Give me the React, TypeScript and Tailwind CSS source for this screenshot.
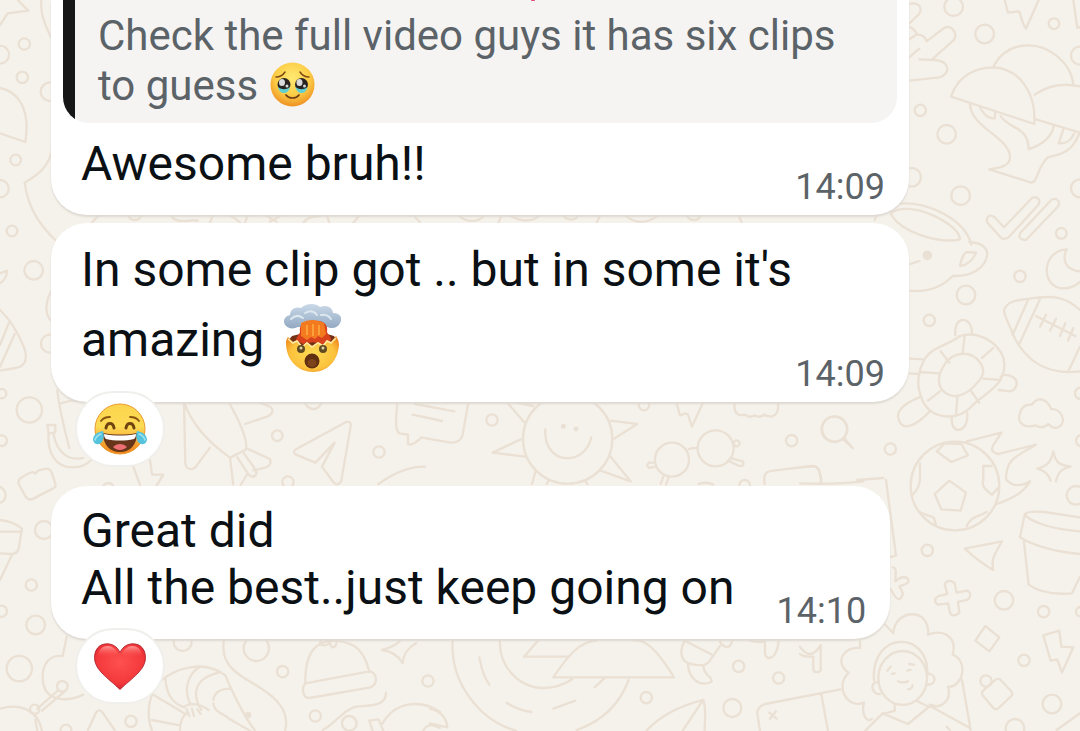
import type { ReactNode } from 'react';

type Dot = [number, number, number];

function Dots({ items }: { items: Dot[] }) {
  return (
    <>
      {items.map(([cx, cy, r]) => (
        <circle key={`${cx}-${cy}`} cx={cx} cy={cy} r={r} />
      ))}
    </>
  );
}

/* Doodle wallpaper, drawn in tiles at three times the display scale */
function Wallpaper() {
  return (
    <svg
      viewBox="0 0 1080 731"
      preserveAspectRatio="xMidYMid slice"
      fill="none"
      stroke="#eae0d4"
      strokeWidth={7}
      strokeLinecap="round"
      strokeLinejoin="round"
      className="absolute inset-0 h-full w-full"
      aria-hidden="true"
    >
      {/* top left */}
      <g transform="scale(.3333)">
        <Dots items={[[73, 132, 17], [0, 164, 27], [67, 232, 17], [150, 275, 28], [47, 480, 16], [0, 566, 26], [36, 693, 16]]} />
        <path d="M53 0l32 32-62 8-23 35M124 0c-4 45 14 80 30 114M0 264c54 10 92 62 76 162L0 400M156 450c-10 50-40 74-82 98 10 74 42 124 92 172" />
        <path d="M276 668c14-20 30-28 50-30M385 645c4 20 34 20 38 0M515 650c20 24 60 6 78 12M630 668l8-20M690 645l30 22M735 668l8-22M795 645l35 20M810 665l30-16M910 668c12-16 30-20 50-20M980 645l8 22M1060 668l20-24M1240 645l20 22M1380 650c20 16 50 18 70 0M1495 668l10-22M1530 645c30 22 70 22 90 0M1690 645c8 18 38 18 45 0M1790 668l10-20M1880 650c30 22 60 20 90 0M2060 645c8 20 36 20 44 0M2215 645l10 22" />
      </g>

      {/* left edge */}
      <g transform="translate(0 210) scale(.3333)">
        <Dots items={[[101, 181, 28], [150, 401, 27], [88, 600, 38], [5, 551, 14], [5, 692, 16], [-8, 855, 25], [132, 960, 27], [94, 1125, 17], [4, 1204, 17], [107, 1245, 28], [58, 1376, 38]]} />
        <path d="M0 190l21-8c0 14-8 30-21 38M0 300c32 30 55 70 72 112 14 40 0 58-26 62L0 482M26 340L0 405M44 372L0 470M158 235c-22 36-26 78-4 98" />
        <path d="M0 930c24 2 46 10 66 26l-10 60c-4 14-12 16-22 16L0 1030M0 965h64M36 1034L0 1110" />
        <path d="M60 806l22-14 16-6 8 5 8-9 26-6c8 0 12 4 16 14l10 32c2 8-2 12-8 14l-58 30c-8 4-16 4-22-4l-20-36c-4-8-4-14 2-20z" />
        <path d="M142 645h24v22l-20 4z" />
      </g>

      {/* between second and third bubbles, left */}
      <g transform="translate(0 380) scale(.3333)">
        <Dots items={[[832, 167, 16], [1137, 216, 17], [864, 306, 17], [940, 62, 25], [325, 326, 17]]} />
        <path d="M172 30c6 60 22 120 36 174M178 72c40-16 90-16 140 20M146 160c-6 54 20 104 74 102 24 0 42-10 54-22M160 160c12 66 50 82 90 74M400 260l22 60M450 240l6 44h34l-22 36" />
        <path d="M552 65l4 184c2 22 24 24 34 8l40-54M552 65c20 60 70 120 138 168l10 80M685 65c30 50 62 120 52 144l-46 24M735 132l66-22c22-10 20-26 4-32l-32-12M740 205l70 32c4 12 0 22-14 26l-36 8M712 232l34 52c14 14 30 0 20-16l-34-48M740 285l-18 30" />
        <path d="M888 208l150-82c12-2 16 4 14 14l-28 162c-6 14-16 14-24 4l-34-46 38-72-58 60-58-24c-8-6-8-12 0-16zM1135 312c60-42 100-52 140-52M1192 68c-4 50-8 80 6 92l26 4v28c14 8 22-8 36-14" />
      </g>

      {/* sun, glasses and magnifier */}
      <g transform="translate(400 390) scale(.3333)">
        <Dots items={[[276, 90, 17], [732, 45, 16], [1175, 152, 17], [816, 209, 51], [947, 175, 54], [1303, 118, 38], [1034, 286, 16], [1010, 160, 9], [503, 147, 134]]} />
        <circle cx={490} cy={109} r={4} fill="#eae0d4" />
        <circle cx={528} cy={117} r={4} fill="#eae0d4" />
        <path d="M62 142l90 16c18 0 32-8 36-24l18-102M45 42l118 22M38 74l88 19" />
        <path d="M436 118c-6 110 120 112 138 24M322 38l50 58M350 38l50 10M632 92l80 10-70 44M362 148l-84 40 98 12M630 198l62 76-90-32M406 246l-10 36M446 272l-6 10M556 272l6 10" />
        <path d="M866 178c8-4 16-4 26-4M764 218h-16c-8 4-8 12 0 16l18-4M790 260l-8 22M806 262l-8 22M990 204l38 10c6 10 0 16-10 14l-34-16M896 282c16-6 32-4 44 2M830 40l10 36 16-6 8 4 12 36 32-70M1004 40c-4 28 10 40 30 34 10 8 20 8 30 2 10 6 20 6 28-2 28 14 46 0 42-36M1332 150l26 24M1094 282c-4-30 2-38 26-40l116-14c18 0 24 10 28 54" />
      </g>

      {/* top right */}
      <g transform="translate(800 0) scale(.3333)">
        <Dots items={[[461, 20, 28], [554, 102, 28], [762, 71, 16], [840, 167, 27], [361, 331, 17], [440, 403, 28], [335, 532, 28], [482, 587, 28], [840, 565, 27], [784, 700, 16]]} />
        <path d="M328 12c28-8 42 12 28 32l-28 26M328 80c14 6 18 12 24 24 14 0 24 8 28 20l52-40c22-10 42 12 30 36l-66 58M328 118l24-16M358 146l-32 28M358 178l46 2c50 4 46 44 14 52l-90 10M614 0l10 38 34-4c4 10 8 36 20 52l38-86M820 0l12 84 10-4" />
        <path d="M453 290c20-60 70-88 128-88 80 4 128 80 122 170zM580 200c40-76 130-80 188-34 36 28 50 60 52 90M704 284c40-28 90-36 140-24M708 358l132 40" />
        <path d="M510 314c4 70 124 100 120 160-2 24-30 30-62 34l126 40c20 0 18-50 50-76 34-10 70-10 94-72M540 322c14 24 24 34 44 34l2-22M602 348c24 40 84 30 84 100 30-10 68-28 76-72M790 388l-14 42c24 2 36-8 46-28" />
        <path d="M562 668c-6-16 8-28 22-16l28 30 84-88c18-8 28 8 18 22l-88 96c-12 8-18 6-24 0zM660 700l94-100c18-10 30 8 18 22l-94 98c-18 0-22-8-18-20zM224 660c20-60 120-64 204-20 46 24 76 54 86 94M272 640c54-44 206 30 208 78-60 14-180-20-208-78" />
      </g>

      {/* right middle */}
      <g transform="translate(800 230) scale(.3333)">
        <Dots items={[[660, 139, 17], [498, 195, 28], [388, 271, 17], [104, 597, 38], [271, 657, 17], [842, 490, 17], [845, 632, 17]]} />
        <circle cx={382} cy={76} r={11} fill="#eae0d4" />
        <path d="M328 103l30-10M326 182c60 6 100-10 132-44 60 2 100-26 104-66-2-24-24-34-54-36M480 108c4-18 8-36 20-42l28 2c-8 22-28 38-48 40zM800 58c-70 4-80 100-22 116 24 4 44-2 62-18M800 58c-16 36 0 62 40 66" />
        <path d="M612 240c12-28 40-30 76-34 74-12 112-4 152 34M612 240c0 20 16 40 28 76 40 84 110 120 200 108M684 210l-46 104M720 208l-64 138M708 258l118 60M738 254l-18 36M768 266l-18 36M796 280l-16 38M820 294l-16 38M840 350l-34 72" />
        <path d="M368 400c20-50 70-50 112-82 50-16 110 14 130 64 20 84-60 106-98 150-40 42-118 36-144-20-16-34-20-70 0-112z" />
        <path d="M436 400c24-32 66-38 94-14 24 24 28 46 2 72-22 28-62 54-94 32-30-20-26-56-2-90zM494 318l-6 52M422 364l26 34M580 354l-34 30M360 426l56 4M550 446l52 4M384 512l36-28M468 556l4-54M514 484l24 34M466 316c-6-62 50-60 50-6M602 440c10-8 22-6 34 0 24 12 14 40-6 44l-34-4M370 388l-40-2M328 430l30 2M364 500c-48 18-70 36-70 60 10 50 50 30 96-16M456 562c-8 52 50 52 46-12" />
        <path d="M660 550c4-18 16-28 36-26 18-28 46-16 58 14 28-4 48 36 24 52-14 8-22 2-34-8-12 14-28 10-38 4-36 12-56-12-46-36zM134 626l24 28M500 634l104-26c-20 34-30 40-28 52 6 8 12 12 20 12l112-28c-60 36-90 42-90 104M410 664l24-24 50 2 20 34-50 20zM360 750v-50M550 750v-42h24M760 664c6 34 20 42 52 46-28 6-38 18-44 44M760 664c-6 32-18 44-48 52 18 4 32 14 40 36M0 712l40-4c18 2 20 20 24 42M170 750l80-6" />
      </g>

      {/* bottom right */}
      <g transform="translate(800 480) scale(.3333)">
        <Dots items={[[465, 18, 133], [828, 46, 28], [382, 211, 17], [612, 361, 28], [731, 395, 17], [842, 395, 14], [672, 541, 17], [756, 672, 28], [645, 745, 28], [558, 603, 17]]} />
        <path d="M448 2l50 36-16 54-58-4-20-46zM338 44c10-10 20-24 22-44M358 94c10 12 32 10 44 20l6 22M500 138c14-30 32-26 60-42M550 0c-8 18 8 30 26 44l18-20M590 72c50-18 80-34 100-68M620 0c20 22 48 18 70 4M0 10c60 2 140 0 190-6M258 0l30 226-18 6" />
        <path d="M674 104c4-10 30-10 60-8l106 16M674 104l-14 68c40 26 110 44 180 50M674 104c24 26 90 44 166 50M672 186l14 128c30 22 80 30 130 26l24-50M494 206l112-22c-20 38-34 50-26 86-26-14-64-44-86-64zM434 312c6-12 22-12 30-2l6 28 32-6c12 6 12 22-2 28l-26 6 4 32c-10 10-24 12-28 0l-6-28-30 4c-12-6-12-20 2-26l26-6z" />
        <path d="M278 262c14 0 8 20 8 42 20-18 38-14 40-2-2 14-20 12-28 18 10 12 16 28 0 38-14-2-18-20-26-30M556 438l42 34-30 42-42-32zM730 466l48-14 6 48 36 2-34 76-14-40-20 4zM586 600c6-4 12-4 16 0l32 34c4 6 4 10 0 14l-38 36c-6 6-12 4-16 0l-32-38c-4-6-2-12 4-16zM770 750l70-50" />
        <path d="M280 460c4-74 112-80 104 4 50-18 88 10 74 60 50 20 30 100-14 96 12 40-20 70-54 54M280 460l-26-28M180 484v20c-50-6-78 44-34 74-44 44-2 110 46 90-10 38 12 64 24 48M284 672v20l-40 12-48 48M248 700l76 32 66-54 120 66M352 664l30 14M222 600c-10-150 168-150 160-14M236 606c-30-2-20 40 4 36M384 580c28 4 24 34 0 34M486 600l26 150M440 740l10 10" />
        <ellipse cx={308} cy={594} rx={73} ry={81} />
        <path d="M262 572l10-12M276 582l8-2M328 552l14 2M322 572l10-2M294 604c8 4 20 4 30 0M324 628c8 0 12-4 14-12M0 500c20 30 40 30 62-4v70c0 14-22 14-22 0v-36c-20 0-32 0-40-8" />
      </g>

      {/* bottom left */}
      <g transform="translate(0 620) scale(.3333)">
        <Dots items={[[187, 199, 16], [393, 304, 17], [198, 330, 16], [548, 66, 27], [769, 85, 38], [848, 155, 17], [946, 288, 17], [1284, 183, 17], [1048, 310, 22], [104, 268, 14]]} />
        <circle cx={745} cy={285} r={6} fill="#eae0d4" />
        <path d="M200 50l-12 58c-50-6-66 40-58 84 10 50 70 56 120 32M176 210l-64 56M192 216l-66 56M0 266c60-18 114 4 126 66M106 300l6 32M264 330l24-52c6-10 14-8 20 0l36 52" />
        <path d="M496 172c60-40 130-44 180-6 20 50 60 130 88 164M640 240c4-30 30-34 54-34M640 250c0 24 28 30 50 48l60 34M496 172c-50 30-60 110-40 160M496 172c2 50 22 80 58 90M552 280c-30-20-60-36-92-56M456 300l84 16M552 260c20-14 50-8 74 10M604 270c-30-50-20-96 54-112M570 250c-20-40-6-90 30-110M560 268l8 20M576 266l6 22M592 268l10 14M540 330c0-24 6-40 20-50" />
        <path d="M672 60c-10 60 20 90 70 120 70 40 130 80 114 150M916 190c-2-80 24-130 88-128 60 4 90 30 104 94M916 190l192-36c20 2 30 34 4 48l-184 32c-20 0-24-30-12-44zM964 60c-14 20 18 20 26 6 2 22 18 20 20 0M1146 90c30-8 44-16 54-28M1146 90c28 4 50 16 62 40 2-30 16-46 40-60M968 330c40-20 60-60 100-70 40-4 90 0 90-42M1108 302l28-4 14 34M1148 310c40-70 120-70 172-34M1270 332c10-20 28-20 50-8M1108 302l10 30" />
      </g>

      {/* bottom centre */}
      <g transform="translate(430 620) scale(.3333)">
        <Dots items={[[926, 139, 17], [1046, 174, 17], [649, 233, 17], [907, 264, 27]]} />
        <path d="M68 62c-8 124 80 240 190 270M210 62c-4 80 60 142 132 142 30 0 60-10 84-26M440 330c80-28 130-80 156-150M148 112c6 34 14 60 30 82M230 248c24 16 46 24 74 28M370 266l66-24M494 202l28-26M370 172h362c-30-50-80-120-120-110M370 172c40-60 80-110 130-110M414 110H282l42-48" />
        <path d="M764 62c-16 30-14 66 20 70 24 4 46 10 58-14l28-40M770 65l74 38M774 134c2 40 34 68 70 52 8-14-18-14-24-46M870 66c14 20 30 20 36-2M960 62c20 6 30 6 44 2 4 20-6 46 12 50 20 0 28-30 30-50M650 332c40-44 100-74 170-92 10 30 4 60 4 92M818 242l-60 90M990 332l-8-52c0-18 10-24 24-28l226-44M1174 222l20 110M1018 278l22 18M1020 296l18-22M0 266c40 10 50 34 52 56l-52-12" />
      </g>
    </svg>
  );
}

function HoldingBackTears() {
  return (
    <svg viewBox="0 0 45 45" className="ml-0.5 inline-block h-[45px] w-[45px] align-[-7px]" role="img" aria-label="Face holding back tears">
      <defs>
        <radialGradient id="tearsFace" cx=".5" cy=".35" r=".65">
          <stop offset="0" stopColor="#ffea72" />
          <stop offset=".6" stopColor="#fccd47" />
          <stop offset="1" stopColor="#ee9021" />
        </radialGradient>
      </defs>
      <circle cx="22.5" cy="22.5" r="22" fill="url(#tearsFace)" />
      <path d="M6 15c4 0 7-2 9-5M30 10c2 3 5 5 9 5" stroke="#7d4b12" strokeWidth="1.5" fill="none" strokeLinecap="round" />
      <circle cx="14" cy="22.5" r="6.5" fill="#292421" />
      <circle cx="31.5" cy="22.5" r="6.5" fill="#292421" />
      <path d="M8 25c4 3 8 3 12 0-1 5-4 6-6 6s-5-1-6-6zM25.5 25c4 3 8 3 12 0-1 5-4 6-6 6s-5-1-6-6z" fill="#62cfd2" />
      <ellipse cx="12" cy="20.5" rx="3" ry="3.5" fill="#d8dadb" />
      <ellipse cx="29.5" cy="20.5" rx="3" ry="3.5" fill="#d8dadb" />
      <circle cx="17" cy="24" r="1.5" fill="#d5dddc" />
      <circle cx="34.5" cy="24" r="1.5" fill="#d5dddc" />
      <path d="M16 33c3 4 10 4 13 0" stroke="#704014" strokeWidth="1.7" fill="none" strokeLinecap="round" />
    </svg>
  );
}

function ExplodingHead() {
  return (
    <svg viewBox="0 0 57 69" className="ml-2 inline-block h-[69px] w-[57px] align-[-17px]" role="img" aria-label="Exploding head">
      <defs>
        <radialGradient id="boomFace" cx=".5" cy=".5" r=".6">
          <stop offset="0" stopColor="#ffdc54" />
          <stop offset=".7" stopColor="#fbc13c" />
          <stop offset="1" stopColor="#ef8c20" />
        </radialGradient>
        <linearGradient id="boomCloud" x1="0" y1="0" x2="0" y2="1">
          <stop offset="0" stopColor="#c9d9e8" />
          <stop offset="1" stopColor="#93a9c2" />
        </linearGradient>
      </defs>
      <path d="M4 37l4-5 8-2h27l7 2 3 5-9 7H11z" fill="#763217" />
      <path d="M2 22c-4-4-2-10 4-11 0-6 6-9 11-7 5-5 15-5 19-1 7-3 13 1 13 6 8 0 10 6 7 10-2 5-8 6-13 4H14c-4 2-9 2-12-1z" fill="url(#boomCloud)" />
      <path d="M7 15c4-4 8-4 12-1M21 9c5-3 9-2 12 2M37 11c4-1 8 1 10 4" stroke="#dce7f0" strokeWidth="2" fill="none" strokeLinecap="round" />
      <path d="M12 36c1-4 3-5 4-8-1-7 3-10 9-11h10c7 1 9 6 8 11 1 3 4 4 4 8l-8 5-10-3-10 2z" fill="#d8421d" />
      <path d="M17 19c8-4 15-4 23 0l2 11-4 4-4-2-3 3-4-2-4 3-6-4z" fill="#f47a20" />
      <path d="M23 21v10M29 20v12M35 21v10" stroke="#fba13a" strokeWidth="2" />
      <path d="M2 39c0-3 1-5 2-6l5 5 4-2 5 6 5-4 5 4 6-4 5 3 4-5 4 2 5-6c2 3 3 6 3 9-1 16-12 27-26 27S2 57 2 39z" fill="url(#boomFace)" />
      <path d="M4 35l5 4 4-2 5 6 5-4 5 4 6-4 5 3 4-5 4 2 5-5" stroke="#ffe9a5" strokeWidth="1.5" fill="none" />
      <circle cx="17" cy="45" r="4" fill="#5f4a21" />
      <circle cx="39" cy="45" r="4" fill="#5f4a21" />
      <circle cx="17" cy="44" r="1.5" fill="#ded3a5" />
      <circle cx="39" cy="44" r="1.5" fill="#ded3a5" />
      <circle cx="28" cy="57" r="7.5" fill="#603011" />
      <ellipse cx="28" cy="59" rx="4.5" ry="4" fill="#7d441b" />
    </svg>
  );
}

function TearsOfJoy() {
  return (
    <svg viewBox="0 0 54 52" className="h-[52px] w-[54px]" aria-hidden="true">
      <defs>
        <linearGradient id="joyFace" x1="0" y1="0" x2="0" y2="1">
          <stop offset="0" stopColor="#fbd44d" />
          <stop offset=".45" stopColor="#fedb55" />
          <stop offset="1" stopColor="#f08019" />
        </linearGradient>
      </defs>
      <circle cx="27" cy="26" r="25" fill="url(#joyFace)" stroke="#eb9a2c" strokeWidth="1" />
      <path d="M8 18c2-3 5-4 9-4M37 14c4 0 7 1 9 4" stroke="#8a5310" strokeWidth="1.8" fill="none" strokeLinecap="round" />
      <path d="M13 25c1-6 7-6 8 0M33 25c1-6 7-6 8 0" stroke="#70440f" strokeWidth="3" fill="none" strokeLinecap="round" />
      <path d="M10 30c11 2 23 2 34 0 0 12-7 19-17 19S10 42 10 30z" fill="#66351a" />
      <path d="M11 31c11 2 21 2 32 0 0 3-1 4-2 5-9 2-19 2-28 0-1-1-2-2-2-5z" fill="#fff" />
      <path d="M20 44c4-4 10-4 14 0-4 4-10 4-14 0z" fill="#ee6f72" />
      <path d="M10 28c-6 1-10 4-10 9 1 6 9 5 10 0 1-3 1-6 0-9zM44 28c6 1 10 4 10 9-1 6-9 5-10 0-1-3-1-6 0-9z" fill="#55c3dd" />
      <path d="M2 37c1-3 3-5 6-6M52 37c-1-3-3-5-6-6" stroke="#a4e4ee" strokeWidth="1.5" fill="none" strokeLinecap="round" />
    </svg>
  );
}

function RedHeart() {
  return (
    <svg viewBox="0 0 52 47" className="h-[47px] w-[52px]" aria-hidden="true">
      <defs>
        <radialGradient id="heart" cx=".5" cy=".4" r=".65">
          <stop offset="0" stopColor="#ff5150" />
          <stop offset=".7" stopColor="#f3383b" />
          <stop offset="1" stopColor="#cb1f2b" />
        </radialGradient>
        <linearGradient id="heartShine" x1="0" y1="0" x2="0" y2="1">
          <stop offset="0" stopColor="#ffb0b0" stopOpacity=".8" />
          <stop offset="1" stopColor="#ff5150" stopOpacity="0" />
        </linearGradient>
      </defs>
      <path d="M26 9.5C29 3 34 .8 39 .8c8 0 12.5 6 12.5 13.7C51.5 27 38 35 26 46.5 14 35 .5 27 .5 14.5.5 6.8 5 .8 13 .8c5 0 10 2.200 13 8.7z" fill="url(#heart)" stroke="#a91d27" strokeWidth=".8" />
      <path d="M4 12c1-6 5-9 10-9 4 0 8 3 10 8-6 3-14 4-20 1zM28 11c2-5 6-8 10-8 5 0 9 3 10 9-6 3-14 2-20-1z" fill="url(#heartShine)" />
    </svg>
  );
}

function Time({ children }: { children: string }) {
  return <time className="shrink-0 text-[36px] leading-[42px] text-[#5b6368]">{children}</time>;
}

function Reaction({ label, children }: { label: string; children: ReactNode }) {
  return (
    <button
      type="button"
      aria-label={label}
      className="relative -mt-[11px] ml-6 flex h-[76px] w-[90px] items-center justify-center rounded-full border-2 border-[#f0efec] bg-white"
    >
      {children}
    </button>
  );
}

export default function App() {
  return (
    <div className="relative min-h-screen overflow-hidden bg-[#f5f2eb] font-[Roboto,sans-serif] text-[48px] leading-[57px] text-[#0a1014]">
      <Wallpaper />

      <main className="relative flex flex-col items-start pr-[171px] pl-[51px]">
        <article className="w-full rounded-b-[36px] bg-white px-3 pb-[7px] shadow-[0_2px_2px_#dedad2]">
          {/* Quoted message, scrolled partly out of view */}
          <blockquote className="overflow-hidden rounded-b-[26px] bg-[#f5f4f3]">
            <div className="border-l-12 border-[#171717] pb-3 pl-[23px]">
              <div className="flex h-[11px] justify-center">
                <span className="ml-[70px] h-[1px] w-1 rounded-b-full bg-[#e0457b]" />
              </div>
              <p className="text-[42px] leading-[50px] text-[#5b6368]">
                Check the full video guys it has six clips
                <br />
                to guess <HoldingBackTears />
              </p>
            </div>
          </blockquote>
          <div className="flex items-end justify-between pt-3 pr-3 pl-[18px]">
            <p className="pb-4">Awesome bruh!!</p>
            <Time>14:09</Time>
          </div>
        </article>

        <article className="mt-2 flex w-full items-end justify-between rounded-[36px] bg-white pt-3 pr-6 pb-[7px] pl-[30px] shadow-[0_2px_2px_#dedad2]">
          <p className="pb-[21px] leading-[69px]">
            In some clip got .. but in some it's
            <br />
            amazing <ExplodingHead />
          </p>
          <Time>14:09</Time>
        </article>
        <Reaction label="Face with tears of joy, 1 reaction">
          <TearsOfJoy />
        </Reaction>

        <article className="mt-[19px] flex items-end gap-[42px] rounded-[36px] bg-white pt-4 pr-6 pb-[7px] pl-[30px] shadow-[0_2px_2px_#dedad2]">
          <p className="pb-4">
            Great did
            <br />
            All the best..just keep going on
          </p>
          <Time>14:10</Time>
        </article>
        <Reaction label="Red heart, 1 reaction">
          <RedHeart />
        </Reaction>
      </main>
    </div>
  );
}
